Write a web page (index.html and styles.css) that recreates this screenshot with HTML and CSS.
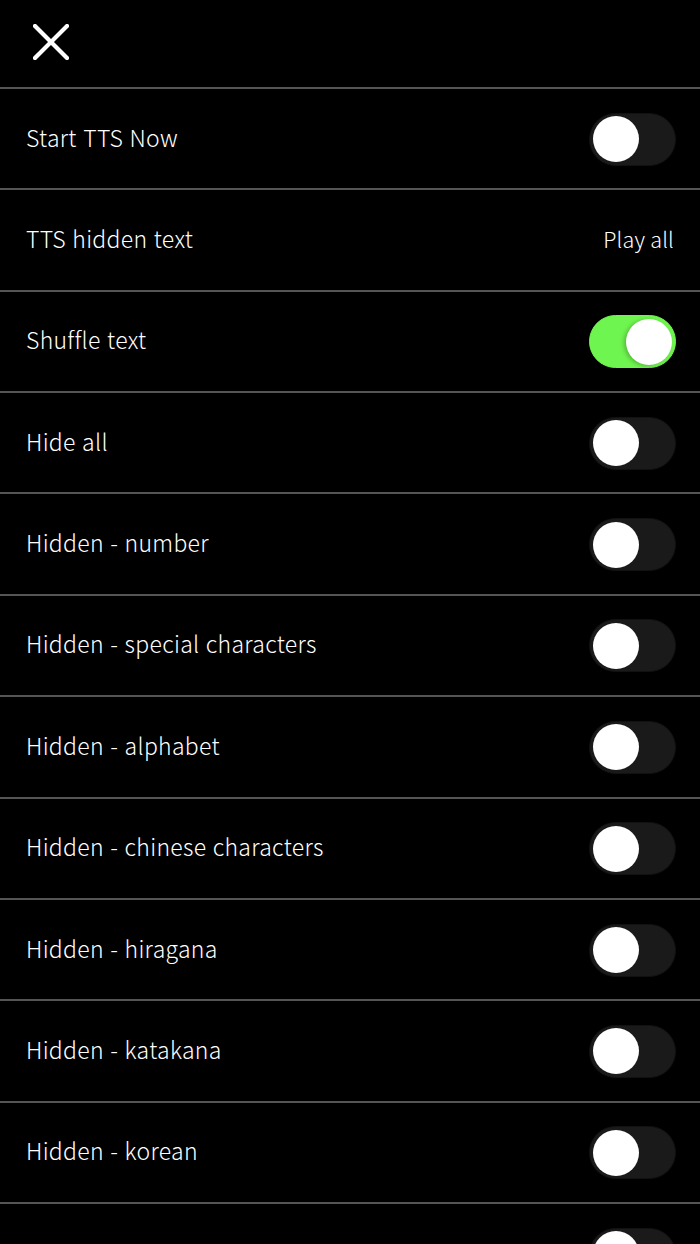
FILE: index.html
```html
<!DOCTYPE html>
<html>
<head>
<meta charset="utf-8">
<link rel="stylesheet" href="styles.css">
</head>
<body>
<div class="screen">
  <header class="top">
    <button class="close" aria-label="Close">
      <svg width="36" height="36" viewBox="0 0 36 36"><path d="M2 2 L34 34 M34 2 L2 34" stroke="#fff" stroke-width="4.2" stroke-linecap="square" fill="none"/></svg>
    </button>
  </header>
  <div class="row"><span class="label">Start TTS Now</span><span class="switch"><span class="knob"></span></span></div>
  <div class="row"><span class="label">TTS hidden text</span><span class="value">Play all</span></div>
  <div class="row"><span class="label">Shuffle text</span><span class="switch on"><span class="knob"></span></span></div>
  <div class="row"><span class="label">Hide all</span><span class="switch"><span class="knob"></span></span></div>
  <div class="row"><span class="label">Hidden - number</span><span class="switch"><span class="knob"></span></span></div>
  <div class="row"><span class="label">Hidden - special characters</span><span class="switch"><span class="knob"></span></span></div>
  <div class="row"><span class="label">Hidden - alphabet</span><span class="switch"><span class="knob"></span></span></div>
  <div class="row"><span class="label">Hidden - chinese characters</span><span class="switch"><span class="knob"></span></span></div>
  <div class="row"><span class="label">Hidden - hiragana</span><span class="switch"><span class="knob"></span></span></div>
  <div class="row"><span class="label">Hidden - katakana</span><span class="switch"><span class="knob"></span></span></div>
  <div class="row"><span class="label">Hidden - korean</span><span class="switch"><span class="knob"></span></span></div>
  <div class="row"><span class="label"></span><span class="switch"><span class="knob"></span></span></div>
</div>
</body>
</html>
```
FILE: styles.css
```css
html, body {
  margin: 0;
  padding: 0;
  background: #000;
}
body {
  font-family: "Noto Sans CJK KR", "Noto Sans", sans-serif;
  color: #fff;
  overflow: hidden;
}
.screen {
  width: 700px;
  height: 1244px;
  overflow: hidden;
}
.top {
  height: 87px;
  display: flex;
  align-items: flex-start;
}
.close {
  background: none;
  border: 0;
  padding: 0;
  margin: 24px 0 0 33px;
  width: 36px;
  height: 36px;
  display: block;
}
.close svg { display: block; }
.row {
  box-sizing: border-box;
  height: 101.36px;
  border-top: 2px solid #555;
  display: flex;
  align-items: center;
  justify-content: space-between;
  padding: 0 24px 0 26px;
}
.label {
  font-size: 23px;
  font-weight: 300;
  letter-spacing: 0.3px;
  word-spacing: 1px;
  position: relative;
  top: -2px;
}
.value {
  font-size: 21.5px;
  font-weight: 300;
  letter-spacing: 0.2px;
  margin-right: 2px;
  position: relative;
  top: -2px;
}
.switch {
  width: 87px;
  height: 53px;
  border-radius: 27px;
  background: #1a1a1a;
  box-sizing: border-box;
  border: 1px solid #111;
  display: flex;
  align-items: center;
  padding: 0 3px;
  margin-top: 1px;
}
.knob {
  width: 46px;
  height: 46px;
  border-radius: 50%;
  background: #fff;
}
.switch.on {
  background: #6ff54f;
  border-color: #6ff54f;
  justify-content: flex-end;
}
.switch.on .knob {
  box-shadow: -2px 1px 4px rgba(0,0,0,0.25);
}
```
